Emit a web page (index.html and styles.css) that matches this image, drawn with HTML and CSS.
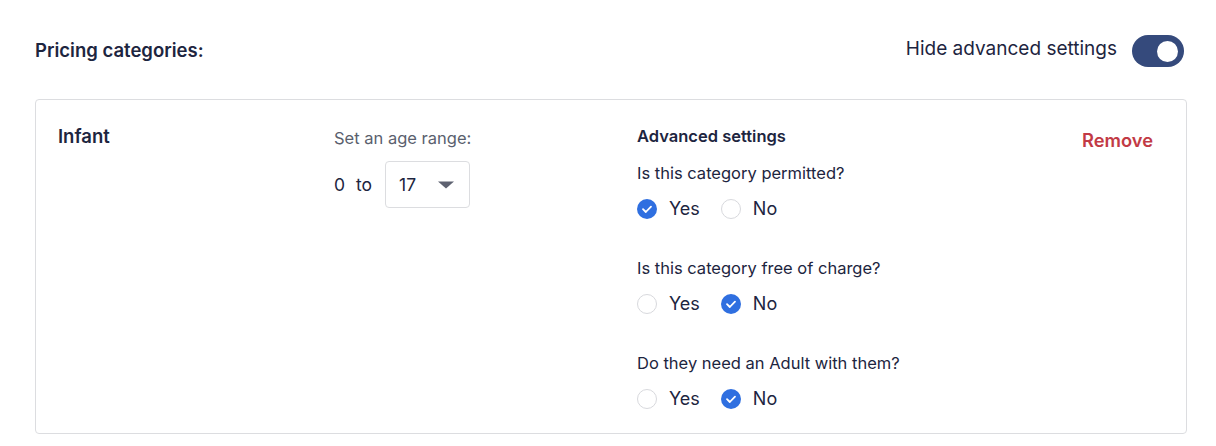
FILE: index.html
```html
<!DOCTYPE html>
<html>
<head>
<meta charset="utf-8">
<link rel="stylesheet" href="styles.css">
</head>
<body>
<div class="page">
  <div class="header">
    <h2 class="title">Pricing categories:</h2>
    <div class="toggle-wrap">
      <span class="toggle-label">Hide advanced settings</span>
      <span class="toggle"><span class="knob"></span></span>
    </div>
  </div>
  <div class="card">
    <div class="col-name">Infant</div>
    <div class="col-age">
      <div class="age-label">Set an age range:</div>
      <div class="age-row">
        <span class="age-from">0</span>
        <span class="age-to">to</span>
        <div class="select">
          <span>17</span>
          <svg class="caret" width="16" height="8" viewBox="0 0 16 8"><path d="M0 0.5 H16 L8 7.5 Z" fill="#5e6271"/></svg>
        </div>
      </div>
    </div>
    <div class="col-adv">
      <div class="adv-title">Advanced settings</div>
      <div class="question">
        <div class="q-label">Is this category permitted?</div>
        <div class="radios">
          <label class="radio"><span class="dot checked"><svg width="20" height="20" viewBox="0 0 20 20"><path d="M6 10.2 L8.8 13 L14 7.6" fill="none" stroke="#fff" stroke-width="1.8" stroke-linecap="round" stroke-linejoin="round"/></svg></span>Yes</label>
          <label class="radio"><span class="dot"></span>No</label>
        </div>
      </div>
      <div class="question">
        <div class="q-label">Is this category free of charge?</div>
        <div class="radios">
          <label class="radio"><span class="dot"></span>Yes</label>
          <label class="radio"><span class="dot checked"><svg width="20" height="20" viewBox="0 0 20 20"><path d="M6 10.2 L8.8 13 L14 7.6" fill="none" stroke="#fff" stroke-width="1.8" stroke-linecap="round" stroke-linejoin="round"/></svg></span>No</label>
        </div>
      </div>
      <div class="question">
        <div class="q-label">Do they need an Adult with them?</div>
        <div class="radios">
          <label class="radio"><span class="dot"></span>Yes</label>
          <label class="radio"><span class="dot checked"><svg width="20" height="20" viewBox="0 0 20 20"><path d="M6 10.2 L8.8 13 L14 7.6" fill="none" stroke="#fff" stroke-width="1.8" stroke-linecap="round" stroke-linejoin="round"/></svg></span>No</label>
        </div>
      </div>
    </div>
    <div class="col-remove"><a class="remove">Remove</a></div>
  </div>
</div>
</body>
</html>
```

FILE: styles.css
```css
* { box-sizing: border-box; }
html, body { margin: 0; padding: 0; background: #fff; }
body {
  font-family: "Inter", "Noto Sans", sans-serif;
  color: #1d2540;
}
.page {
  padding: 35px 29px 0 35px;
}
.header {
  display: flex;
  justify-content: space-between;
  align-items: flex-start;
  height: 32px;
  padding-right: 3px;
}
.title {
  margin: 4px 0 0 0;
  font-size: 18.5px;
  line-height: 22px;
  font-weight: 600;
}
.toggle-wrap {
  display: flex;
  align-items: flex-start;
  gap: 15px;
}
.toggle-label {
  font-size: 19px;
  line-height: 22px;
  margin-top: 3px;
}
.toggle {
  width: 52px;
  height: 32px;
  border-radius: 16px;
  background: #354a7c;
  display: flex;
  align-items: center;
  justify-content: flex-end;
  padding-right: 6px;
}
.knob {
  width: 21px;
  height: 21px;
  border-radius: 50%;
  background: #fff;
}
.card {
  margin-top: 32px;
  border: 1px solid #dcdde0;
  border-radius: 4px;
  height: 335px;
  display: grid;
  grid-template-columns: 276px 303px 1fr auto;
  align-items: start;
  padding: 25px 33px 0 22px;
}
.col-name {
  font-size: 18.5px;
  line-height: 22px;
  font-weight: 600;
}
.age-label {
  font-size: 16.5px;
  line-height: 22px;
  color: #5a5f6e;
  padding-top: 1.5px;
}
.age-row {
  display: flex;
  align-items: center;
  margin-top: 12.5px;
  font-size: 17.5px;
}
.age-to { margin-left: 11px; margin-right: 13px; }
.select {
  width: 85px;
  height: 47px;
  border: 1px solid #dcdde0;
  border-radius: 4px;
  display: flex;
  align-items: center;
  justify-content: space-between;
  padding: 0 15px 0 13px;
}
.adv-title {
  font-size: 16.5px;
  line-height: 22px;
  font-weight: 600;
}
.question { margin-top: 16px; }
.question + .question { margin-top: 38px; }
.q-label { font-size: 16.5px; line-height: 20px; }
.radios {
  display: flex;
  gap: 21px;
  margin-top: 15px;
}
.radio {
  display: flex;
  align-items: center;
  gap: 12px;
  font-size: 18px;
  line-height: 22px;
}
.dot {
  width: 20px;
  height: 20px;
  border-radius: 50%;
  border: 1.5px solid #d8d9dd;
  display: inline-flex;
}
.dot.checked {
  border: none;
  background: #2f6fe0;
}
.remove {
  font-size: 18.3px;
  line-height: 22px;
  font-weight: 600;
  color: #c23a45;
  display: block;
  padding-top: 3.5px;
}
```
